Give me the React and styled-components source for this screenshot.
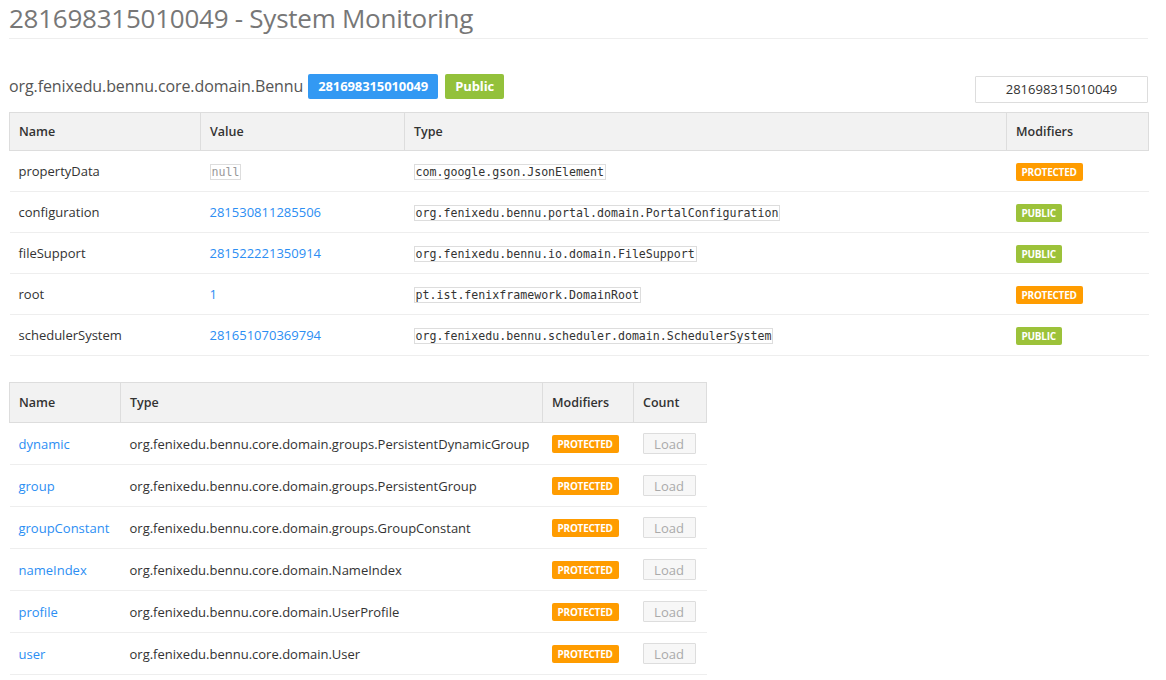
import React from 'react'
import styled, { createGlobalStyle } from 'styled-components'

const GlobalStyle = createGlobalStyle`
    body {
        margin: 0;
        background: #fff;
        font-family: "Open Sans", "Noto Sans", sans-serif;
        color: #333;
    }
`;

const Page = styled.div`
    width: 1139px;
    padding-left: 9px;
`;

const Heading = styled.h1`
    margin: 0;
    padding-top: 2px;
    font-size: 26px;
    font-weight: 400;
    line-height: 32px;
    color: #777;
    letter-spacing: -0.25px;
`;

const Rule = styled.hr`
    margin: 4px 0 0;
    border: 0;
    border-top: 1px solid #eee;
`;

const ObjectBar = styled.div`
    display: flex;
    align-items: center;
    justify-content: space-between;
    margin-top: 33px;
    height: 28px;
`;

const ObjectTitle = styled.div`
    display: flex;
    align-items: center;
    gap: 5px;
    font-size: 16px;
    letter-spacing: -0.1px;
    color: #555;
`;

const Label = styled.span`
    display: inline-block;
    margin-left: ${p => (p.first ? '0' : '2px')};
    padding: 0 10px;
    height: 25px;
    line-height: 25px;
    border-radius: 2px;
    font-size: 13px;
    font-weight: 700;
    letter-spacing: -0.1px;
    color: #fff;
    background: ${p => p.color};
`;

const OidInput = styled.input`
    box-sizing: border-box;
    width: 173px;
    height: 27px;
    margin-top: 6px;
    border: 1px solid #ddd;
    border-radius: 1px;
    text-align: center;
    font-family: inherit;
    font-size: 13px;
    color: #333;
    outline: none;
`;

const Table = styled.table`
    width: ${p => p.width};
    margin-top: ${p => p.top};
    border-collapse: collapse;
    table-layout: fixed;
    font-size: 13px;
`;

const Th = styled.th`
    height: ${p => p.h};
    padding: 0 9px;
    background: #f2f2f2;
    border: 1px solid #ddd;
    text-align: left;
    font-size: 12.5px;
    font-weight: 600;
    color: #333;
`;

const Td = styled.td`
    height: ${p => p.h};
    padding: 0 9px;
    border-bottom: 1px solid #eee;
    vertical-align: middle;
    white-space: nowrap;
`;

const Link = styled.a`
    color: #2c8ef3;
    text-decoration: none;
`;

const Code = styled.code`
    font-family: "DejaVu Sans Mono", "Liberation Mono", monospace;
    font-size: 11.6px;
    color: ${p => (p.muted ? '#999' : '#333')};
    border: 1px solid #ddd;
    padding: 0 1px;
`;

const Badge = styled.span`
    display: inline-block;
    padding: 0 6px;
    height: 18px;
    line-height: 18px;
    border-radius: 2px;
    font-size: 10px;
    font-weight: 700;
    letter-spacing: -0.25px;
    color: #fff;
    background: ${p => (p.kind === 'PUBLIC' ? '#9cc23a' : '#ff9c00')};
`;

const LoadButton = styled.button`
    box-sizing: border-box;
    width: 53px;
    height: 21px;
    padding: 0;
    border: 1px solid #ddd;
    border-radius: 1px;
    background: #f7f7f7;
    font-family: inherit;
    font-size: 13px;
    color: #aaa;
`;

const slots = [
    { name: 'propertyData', value: null, type: 'com.google.gson.JsonElement', mod: 'PROTECTED' },
    { name: 'configuration', value: '281530811285506', type: 'org.fenixedu.bennu.portal.domain.PortalConfiguration', mod: 'PUBLIC' },
    { name: 'fileSupport', value: '281522221350914', type: 'org.fenixedu.bennu.io.domain.FileSupport', mod: 'PUBLIC' },
    { name: 'root', value: '1', type: 'pt.ist.fenixframework.DomainRoot', mod: 'PROTECTED' },
    { name: 'schedulerSystem', value: '281651070369794', type: 'org.fenixedu.bennu.scheduler.domain.SchedulerSystem', mod: 'PUBLIC' },
];

const relations = [
    { name: 'dynamic', type: 'org.fenixedu.bennu.core.domain.groups.PersistentDynamicGroup' },
    { name: 'group', type: 'org.fenixedu.bennu.core.domain.groups.PersistentGroup' },
    { name: 'groupConstant', type: 'org.fenixedu.bennu.core.domain.groups.GroupConstant' },
    { name: 'nameIndex', type: 'org.fenixedu.bennu.core.domain.NameIndex' },
    { name: 'profile', type: 'org.fenixedu.bennu.core.domain.UserProfile' },
    { name: 'user', type: 'org.fenixedu.bennu.core.domain.User' },
];

export default function App() {
    return (
        <Page>
            <GlobalStyle />
            <Heading>281698315010049 - System Monitoring</Heading>
            <Rule />

            <ObjectBar>
                <ObjectTitle>
                    org.fenixedu.bennu.core.domain.Bennu
                    <Label first color="#3399f3">281698315010049</Label>
                    <Label color="#93c13b">Public</Label>
                </ObjectTitle>
                <OidInput defaultValue="281698315010049" />
            </ObjectBar>

            <Table width="1139px" top="12px">
                <colgroup>
                    <col style={{ width: 191 }} />
                    <col style={{ width: 204 }} />
                    <col style={{ width: 602 }} />
                    <col style={{ width: 142 }} />
                </colgroup>
                <thead>
                    <tr>
                        <Th h="37px">Name</Th>
                        <Th h="37px">Value</Th>
                        <Th h="37px">Type</Th>
                        <Th h="37px">Modifiers</Th>
                    </tr>
                </thead>
                <tbody>
                    {slots.map(s => (
                        <tr key={s.name}>
                            <Td h="40px">{s.name}</Td>
                            <Td h="40px">
                                {s.value === null
                                    ? <Code muted>null</Code>
                                    : <Link href="#">{s.value}</Link>}
                            </Td>
                            <Td h="40px"><Code>{s.type}</Code></Td>
                            <Td h="40px"><Badge kind={s.mod}>{s.mod}</Badge></Td>
                        </tr>
                    ))}
                </tbody>
            </Table>

            <Table width="697px" top="26px">
                <colgroup>
                    <col style={{ width: 111 }} />
                    <col style={{ width: 422 }} />
                    <col style={{ width: 91 }} />
                    <col style={{ width: 73 }} />
                </colgroup>
                <thead>
                    <tr>
                        <Th h="39px">Name</Th>
                        <Th h="39px">Type</Th>
                        <Th h="39px">Modifiers</Th>
                        <Th h="39px">Count</Th>
                    </tr>
                </thead>
                <tbody>
                    {relations.map(r => (
                        <tr key={r.name}>
                            <Td h="41px"><Link href="#">{r.name}</Link></Td>
                            <Td h="41px">{r.type}</Td>
                            <Td h="41px"><Badge kind="PROTECTED">PROTECTED</Badge></Td>
                            <Td h="41px"><LoadButton>Load</LoadButton></Td>
                        </tr>
                    ))}
                </tbody>
            </Table>
        </Page>
    )
}
